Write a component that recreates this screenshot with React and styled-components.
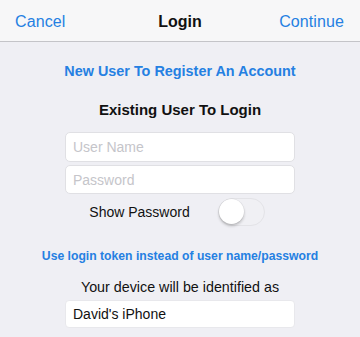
import React, { useState } from 'react';
import styled, { createGlobalStyle } from 'styled-components';

const GlobalStyle = createGlobalStyle`
  html, body {
    margin: 0;
    padding: 0;
    background: #efeff4;
    font-family: "Liberation Sans", Arial, sans-serif;
  }
`;

const Page = styled.div`
  width: 360px;
  height: 337px;
  background: #efeff4;
  overflow: hidden;
`;

const NavBar = styled.header`
  height: 42px;
  box-sizing: border-box;
  padding: 2px 16px 0 15px;
  background: #f7f7f8;
  border-bottom: 1px solid #c4c4c8;
  display: flex;
  align-items: center;
  justify-content: space-between;
  position: relative;
`;

const NavButton = styled.span`
  color: #2580e2;
  font-size: 16px;
  letter-spacing: 0.1px;
`;

const NavTitle = styled.span`
  position: absolute;
  left: 0;
  right: 0;
  text-align: center;
  font-size: 16px;
  font-weight: 700;
  color: #111;
  pointer-events: none;
`;

const Body = styled.main`
  display: flex;
  flex-direction: column;
  align-items: center;
`;

const LinkText = styled.div`
  color: #2580e2;
  font-weight: 700;
  font-size: ${p => p.$size}px;
  margin-top: ${p => p.$top}px;
  line-height: 16px;
`;

const Heading = styled.div`
  font-size: 15px;
  font-weight: 700;
  color: #111;
  margin-top: 23px;
  line-height: 16px;
`;

const Fields = styled.div`
  display: flex;
  flex-direction: column;
  gap: 3px;
  margin-top: 14px;
`;

const Field = styled.input`
  width: 230px;
  height: ${p => p.$h || 29}px;
  box-sizing: border-box;
  border: 1px solid ${p => (p.$plain ? '#e8e8ec' : '#e0e0e4')};
  border-radius: ${p => (p.$plain ? 4 : 5)}px;
  background: #fff;
  padding: 0 7px;
  font-family: inherit;
  font-size: 14px;
  color: #111;
  outline: none;

  &::placeholder {
    color: #c5c5ca;
  }
`;

const SwitchRow = styled.label`
  display: flex;
  align-items: center;
  gap: 28px;
  margin-top: 4px;
  margin-left: -6px;
  font-size: 14px;
  color: #111;
`;

const Track = styled.span`
  width: 47px;
  height: 28px;
  box-sizing: border-box;
  border-radius: 14px;
  border: 1.5px solid #e3e3e7;
  background: ${p => (p.$on ? '#4cd964' : '#f0f0f4')};
  position: relative;
  display: inline-block;
  cursor: pointer;
`;

const Knob = styled.span`
  position: absolute;
  top: 0;
  left: ${p => (p.$on ? 19 : 0)}px;
  width: 25px;
  height: 25px;
  border-radius: 50%;
  background: #fff;
  box-shadow: 0 2px 3px rgba(0, 0, 0, 0.22), 0 0 0 0.5px rgba(0, 0, 0, 0.06);
`;

const Caption = styled.div`
  font-size: 14.3px;
  color: #111;
  margin-top: 15px;
  line-height: 16px;
`;

const DeviceField = styled.div`
  margin-top: 5px;
`;

export default function App() {
  const [show, setShow] = useState(false);
  return (
    <Page>
      <GlobalStyle />
      <NavBar>
        <NavButton>Cancel</NavButton>
        <NavTitle>Login</NavTitle>
        <NavButton>Continue</NavButton>
      </NavBar>
      <Body>
        <LinkText $size={14.4} $top={21}>New User To Register An Account</LinkText>
        <Heading>Existing User To Login</Heading>
        <Fields>
          <Field $h={30} placeholder="User Name" />
          <Field placeholder="Password" type={show ? 'text' : 'password'} />
        </Fields>
        <SwitchRow onClick={() => setShow(!show)}>
          Show Password
          <Track $on={show}>
            <Knob $on={show} />
          </Track>
        </SwitchRow>
        <LinkText $size={12.2} $top={22}>Use login token instead of user name/password</LinkText>
        <Caption>Your device will be identified as</Caption>
        <DeviceField>
          <Field $plain $h={28} defaultValue="David's iPhone" />
        </DeviceField>
      </Body>
    </Page>
  );
}
